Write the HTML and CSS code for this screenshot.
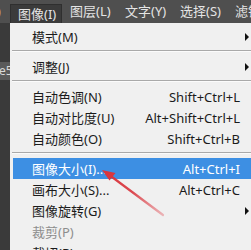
FILE: index.html
```html
<!DOCTYPE html>
<html lang="zh">
<head>
  <meta charset="UTF-8">
  <title>图像菜单</title>
  <link rel="stylesheet" href="styles.css">
</head>
<body>

  <div class="app">
    <header class="menubar">
      <span class="bar-edge">)</span>
      <a class="bar-item active">图像(I)</a>
      <a class="bar-item">图层(L)</a>
      <a class="bar-item">文字(Y)</a>
      <a class="bar-item">选择(S)</a>
      <a class="bar-item">滤镜(T)</a>
    </header>

    <div class="main">
      <aside class="dock">
        <div class="dock-tab">e5</div>
      </aside>

      <ul class="menu">
        <li class="item"><span>模式(M)</span><i class="arrow"></i></li>
        <li class="sep"></li>
        <li class="item"><span>调整(J)</span><i class="arrow"></i></li>
        <li class="sep"></li>
        <li class="item"><span>自动色调(N)</span><kbd>Shift+Ctrl+L</kbd></li>
        <li class="item"><span>自动对比度(U)</span><kbd>Alt+Shift+Ctrl+L</kbd></li>
        <li class="item"><span>自动颜色(O)</span><kbd>Shift+Ctrl+B</kbd></li>
        <li class="sep"></li>
        <li class="item selected"><span>图像大小(I)...</span><kbd>Alt+Ctrl+I</kbd></li>
        <li class="item"><span>画布大小(S)...</span><kbd>Alt+Ctrl+C</kbd></li>
        <li class="item"><span>图像旋转(G)</span><i class="arrow"></i></li>
        <li class="item disabled"><span>裁剪(P)</span></li>
        <li class="item"><span>裁切(R)...</span></li>
      </ul>
    </div>

    <svg class="pointer" width="251" height="250" viewBox="0 0 251 250">
      <defs>
        <linearGradient id="fade" x1="163" y1="215" x2="102" y2="170" gradientUnits="userSpaceOnUse">
          <stop offset="0" stop-color="#e0434b" stop-opacity="0.35"/>
          <stop offset="0.5" stop-color="#d9363e" stop-opacity="0.9"/>
          <stop offset="1" stop-color="#d9363e"/>
        </linearGradient>
      </defs>
      <line x1="163" y1="215" x2="110" y2="175.5" stroke="url(#fade)" stroke-width="2.2" stroke-linecap="round"/>
      <polygon points="102,170 115.5,173 109.5,180.5" fill="#d9363e"/>
    </svg>
  </div>

</body>
</html>
```

FILE: styles.css
```css
body {
  margin: 0;
  background: #f0f0f0;
  font-family: "Noto Sans", "Noto Sans CJK SC", sans-serif;
  font-size: 13px;
}
.app {
  position: relative;
  width: 251px;
  height: 250px;
  overflow: hidden;
}
.menubar {
  display: flex;
  height: 23px;
  background: #4f4f4f;
  color: #e4e4e4;
  white-space: nowrap;
}
.bar-edge {
  flex: none;
  width: 10px;
  line-height: 23px;
  text-indent: -3px;
  color: #c9b26a;
  overflow: hidden;
}
.bar-item {
  flex: none;
  width: 55px;
  padding-left: 8px;
  box-sizing: border-box;
  line-height: 23px;
}
.bar-item.active {
  width: 52px;
  margin-top: 4px;
  line-height: 18px;
  background: #3b3b3b;
  border: 1px solid #2f2f2f;
  border-bottom: none;
  padding-left: 7px;
}
.main {
  display: flex;
  height: 227px;
}
.dock {
  flex: none;
  width: 10px;
  background: #3a3a3a;
  padding-top: 39px;
}
.dock-tab {
  height: 18px;
  background: #5a5a5a;
  color: #d8d8d8;
  line-height: 18px;
  text-indent: -1px;
  overflow: hidden;
  font-size: 12px;
}
.menu {
  flex: 1;
  list-style: none;
  margin: 0;
  padding: 3px 0 0 0;
  background: #f0f0f0;
  color: #1b1b1b;
}
.item {
  display: flex;
  align-items: center;
  height: 21px;
  margin-left: 3px;
  padding: 0 11px 0 19px;
  white-space: nowrap;
}
.item span {
  flex: 1;
}
.item kbd {
  font-family: inherit;
  font-size: 13px;
}
.item.selected {
  background: #3d8fe3;
  color: #fff;
}
.item.disabled {
  color: #8d8d8d;
}
.arrow {
  width: 0;
  height: 0;
  margin-right: -9px;
  border-top: 4px solid transparent;
  border-bottom: 4px solid transparent;
  border-left: 4px solid #111;
}
.sep {
  height: 1px;
  margin: 3px 0 5px 2px;
  background: #a9a9a9;
  box-shadow: 0 1px 0 #fbfbfb;
}
.pointer {
  position: absolute;
  left: 0;
  top: 0;
  pointer-events: none;
}
```
